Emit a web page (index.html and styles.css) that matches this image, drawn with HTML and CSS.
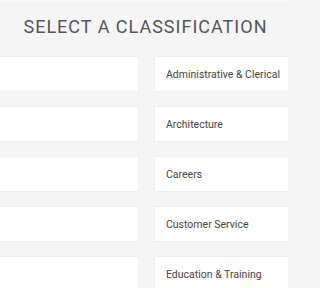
FILE: index.html
```html
<!DOCTYPE html>
<html>
<head>
<meta charset="utf-8">
<link rel="stylesheet" href="styles.css">
</head>
<body>
<header class="header">
  <h1 class="title">SELECT A CLASSIFICATION</h1>
</header>
<main class="grid">
  <div class="item"></div>
  <div class="item">Administrative &amp; Clerical</div>
  <div class="item"></div>
  <div class="item">Architecture</div>
  <div class="item"></div>
  <div class="item">Careers</div>
  <div class="item"></div>
  <div class="item">Customer Service</div>
  <div class="item"></div>
  <div class="item">Education &amp; Training</div>
</main>
</body>
</html>
```
FILE: styles.css
```css
html {
  margin: 0;
  padding: 0;
  background: #f5f5f5;
}
body {
  margin: 0;
  padding: 0;
  width: 288px;
  height: 288px;
  overflow: hidden;
  background: #f5f5f5;
  font-family: Roboto, "Liberation Sans", sans-serif;
}
.header {
  height: 51px;
  display: flex;
  align-items: center;
  justify-content: center;
  border-top: 1px solid #fafafa;
  box-sizing: border-box;
}
.title {
  margin: 0;
  font-size: 18px;
  font-weight: 400;
  line-height: 21px;
  letter-spacing: 1px;
  color: #555;
  padding-left: 3px;
  white-space: nowrap;
}
.grid {
  display: grid;
  grid-template-columns: 150px 150px;
  gap: 14px 15px;
  margin-left: -11px;
  padding-top: 5px;
}
.item {
  height: 36px;
  box-sizing: border-box;
  background: #fff;
  border: 1px solid #efefef;
  display: flex;
  align-items: center;
  padding-left: 11px;
  font-size: 10.5px;
  color: #444;
  white-space: nowrap;
}
```
